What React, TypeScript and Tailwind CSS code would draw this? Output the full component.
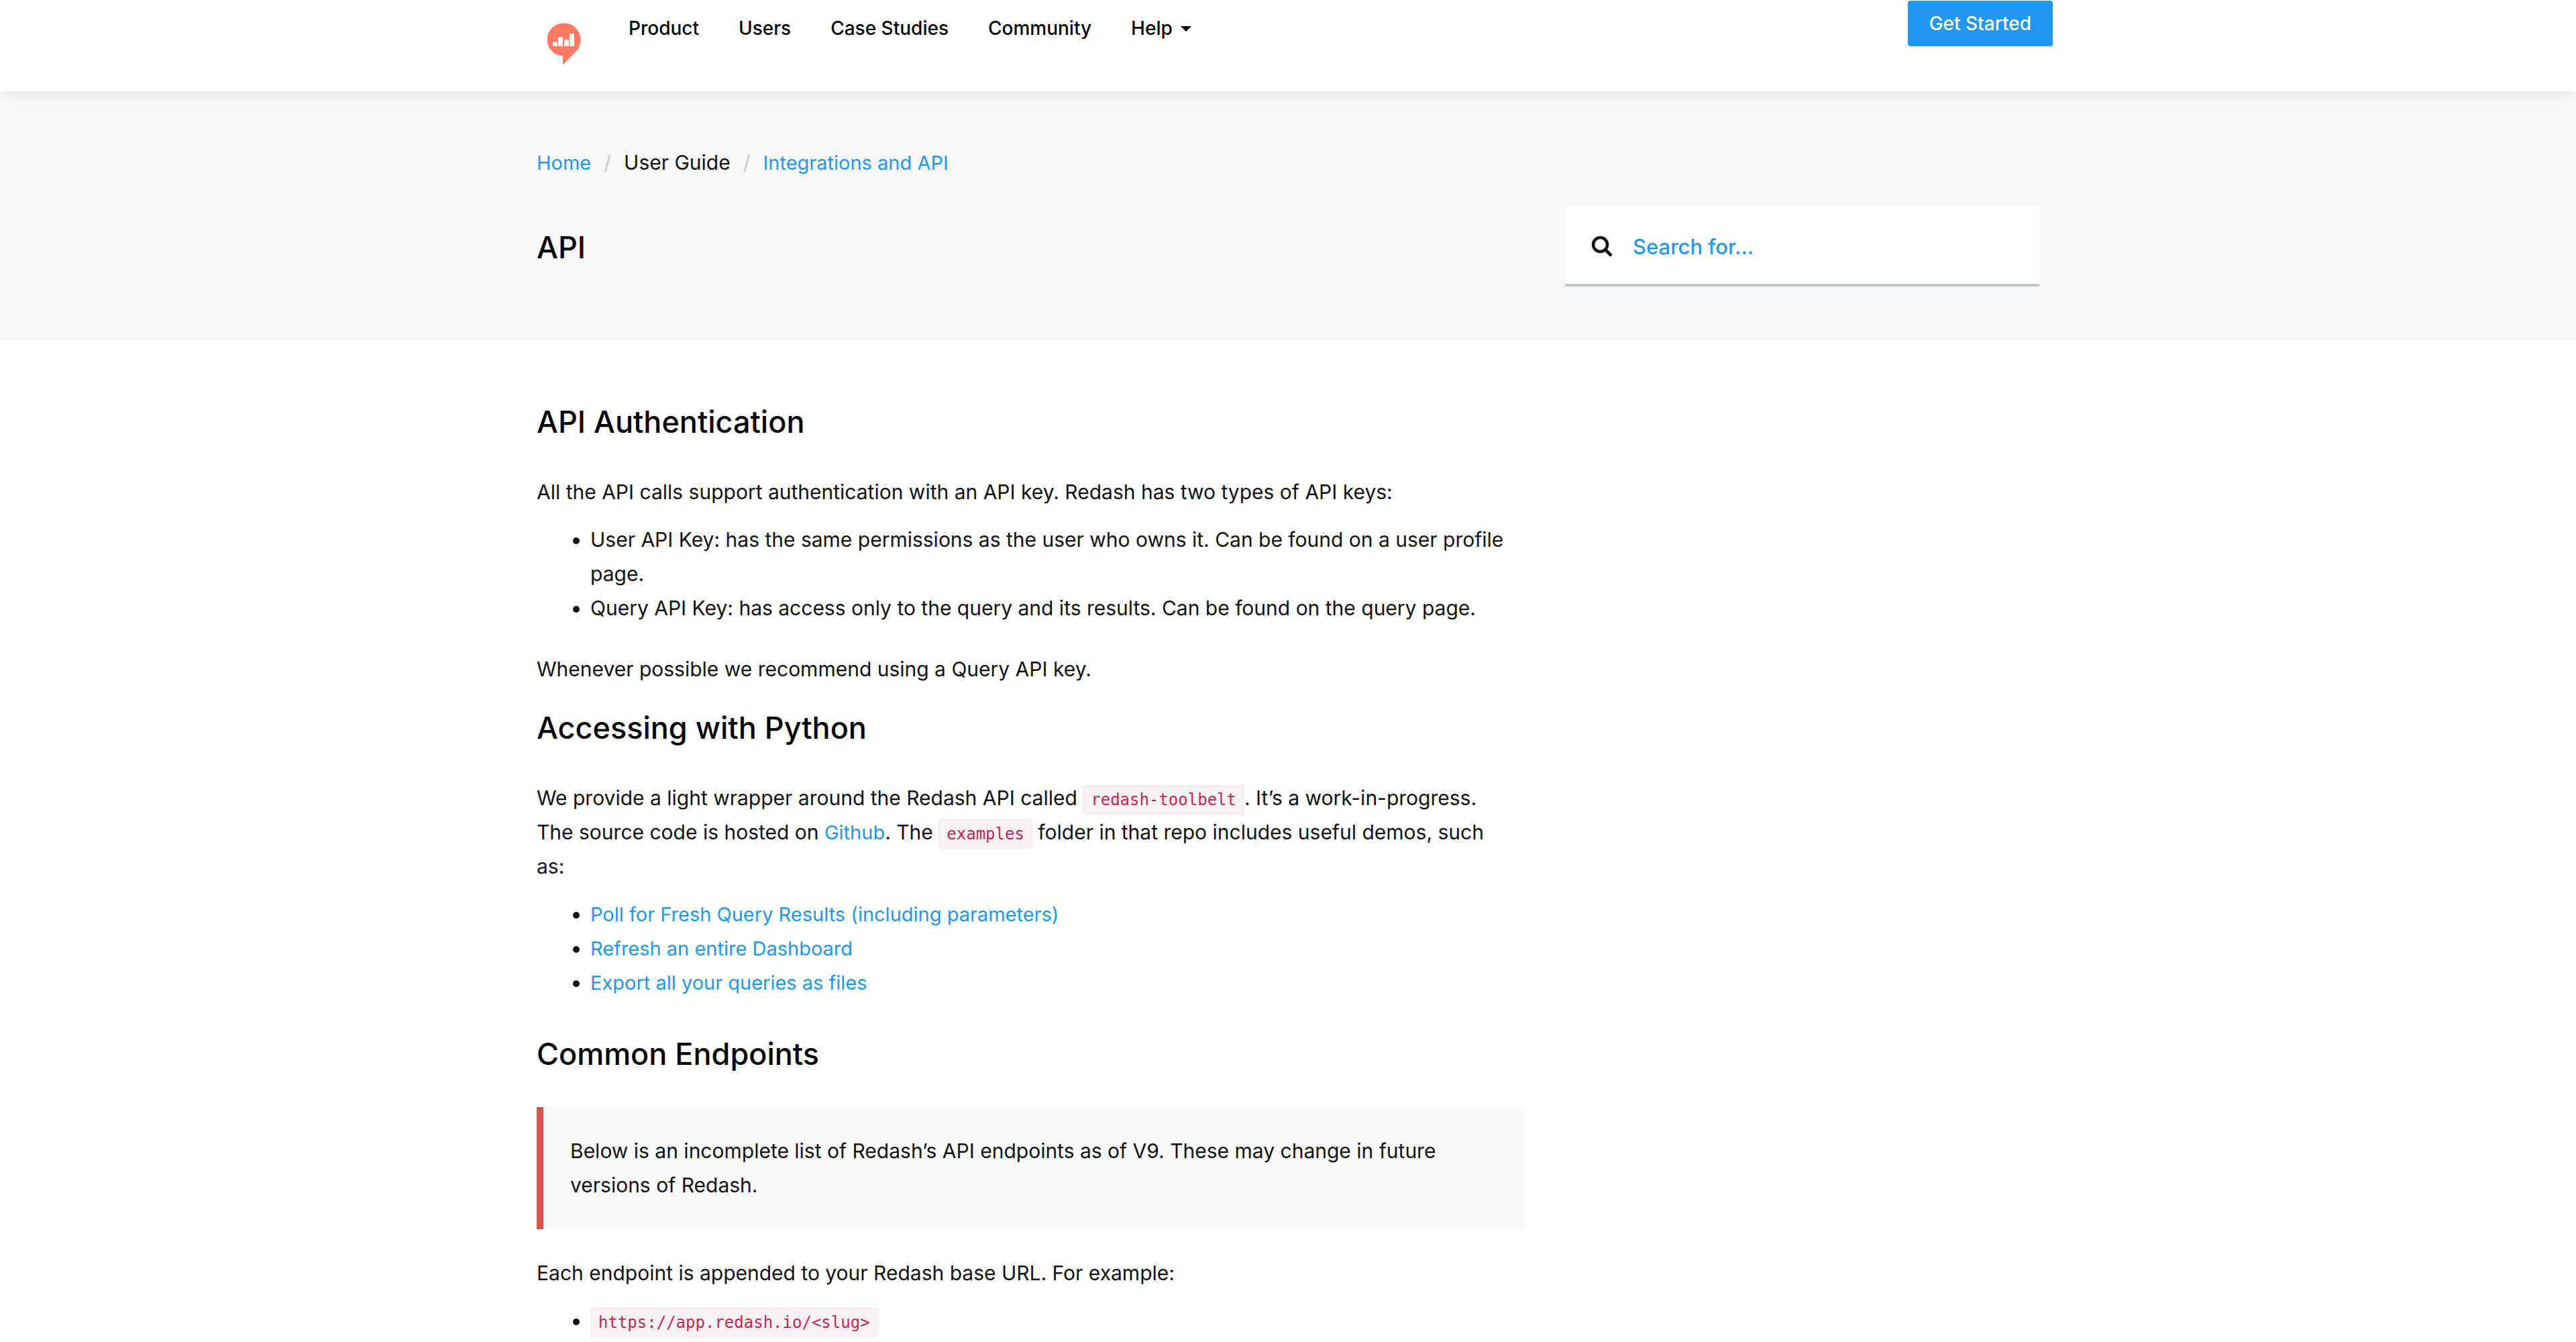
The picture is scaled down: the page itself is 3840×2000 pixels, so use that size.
import type { ReactNode } from "react";

const navItems = ["Product", "Users", "Case Studies", "Community"];

const demos = [
  "Poll for Fresh Query Results (including parameters)",
  "Refresh an entire Dashboard",
  "Export all your queries as files",
];

function Logo() {
  return (
    <svg viewBox="0 0 50 64" className="h-16 w-[50px]" aria-hidden="true">
      <path
        d="M25 0.5A24.5 24.5 0 0 1 49.5 25C49.5 31 48 35.500 45 40L23 63V49.500A24.5 24.5 0 0 1 25 0.500Z"
        fill="#ff7964"
      />
      <g fill="#fff">
        <rect x="8" y="28.500" width="7" height="6.500" rx="1.5" />
        <rect x="16" y="21" width="7" height="14" rx="1.5" />
        <rect x="25" y="25" width="7" height="10" rx="1.5" />
        <rect x="33" y="16" width="7" height="19" rx="1.5" />
      </g>
    </svg>
  );
}

function SearchIcon() {
  return (
    <svg viewBox="0 0 32 32" className="size-8 shrink-0" fill="none" stroke="#111" strokeLinecap="round" aria-hidden="true">
      <circle cx="13.500" cy="13.500" r="10.500" strokeWidth="4.500" />
      <path d="M22 22L28.500 28.500" strokeWidth="5" />
    </svg>
  );
}

function TextLink({ children }: { children: ReactNode }) {
  return (
    <a href="#" className="text-[29px] leading-none text-[#2196f3]">
      {children}
    </a>
  );
}

function Code({ children }: { children: ReactNode }) {
  return (
    <code className="rounded border-2 border-[#f5ecef] bg-[#f9f2f4] px-2.5 py-1.5 font-['DejaVu_Sans_Mono',monospace] text-[24px] leading-none text-[#c7254e]">
      {children}
    </code>
  );
}

function Heading({ children }: { children: ReactNode }) {
  return <h2 className="text-[45px] leading-[60px] font-medium text-black">{children}</h2>;
}

export default function App() {
  return (
    <div className="min-h-screen bg-white font-['Inter',sans-serif] text-[30px] leading-[51px] text-[#111]">
      <header className="relative z-10 h-[136px] bg-white shadow-[0_2px_20px_rgba(0,0,0,0.08)]">
        <div className="mx-auto flex max-w-[2280px] items-start">
          <a href="#" aria-label="Redash" className="ml-9 mt-[34px] block">
            <Logo />
          </a>
          <nav className="ml-[71px] mt-[17px] flex gap-[59px] text-[28px] font-medium text-black">
            {navItems.map((item) => (
              <a key={item} href="#">
                {item}
              </a>
            ))}
            <button type="button" className="flex items-center gap-3">
              Help
              <svg viewBox="0 0 16 8" className="h-2 w-4" aria-hidden="true">
                <path d="M0 0H16L8 8Z" />
              </svg>
            </button>
          </nav>
          <a
            href="#"
            className="mt-px ml-auto rounded bg-[#2196f3] px-8 pt-[9px] pb-2 text-[28px] font-medium text-white"
          >
            Get Started
          </a>
        </div>
      </header>

      <section className="bg-[#f7f7f7] pt-[81px] pb-20">
        <div className="mx-auto max-w-[2240px]">
          <nav aria-label="Breadcrumb" className="flex gap-[19px]">
            <a href="#" className="text-[29px] text-[#2196f3]">
              Home
            </a>
            <span className="text-[#ccc]">/</span>
            <span>User Guide</span>
            <span className="text-[#ccc]">/</span>
            <a href="#" className="text-[29px] text-[#2196f3]">
              Integrations and API
            </a>
          </nav>
          <div className="mt-[39px] flex items-center justify-between">
            <h1 className="pt-1 text-[45px] leading-[60px] font-medium text-black">API</h1>
            <label className="flex h-[120px] w-[707px] items-center gap-[30px] border-b-4 border-[#bcc8ce] bg-white px-[39px] pt-1">
              <SearchIcon />
              <input
                type="text"
                aria-label="Search"
                placeholder="Search for..."
                className="min-w-0 flex-1 text-[31px] font-medium outline-none placeholder:text-[#2196f3]"
              />
            </label>
          </div>
        </div>
      </section>

      <div className="mx-auto max-w-[2240px] pt-[92px]">
        <main className="max-w-[1473px]">
          <Heading>API Authentication</Heading>
          <p className="mt-[49px]">
            All the API calls support authentication with an API key. Redash has two types of API keys:
          </p>
          <ul className="mt-5 list-disc pl-20">
            <li>
              User API Key: has the same permissions as the user who owns it. Can be found on a user profile
              <br />
              page.
            </li>
            <li>Query API Key: has access only to the query and its results. Can be found on the query page.</li>
          </ul>
          <p className="mt-10 mb-8">Whenever possible we recommend using a Query API key.</p>

          <Heading>Accessing with Python</Heading>
          <p className="mt-[49px]">
            We provide a light wrapper around the Redash API called <Code>redash-toolbelt</Code>. It’s a
            work-in-progress.
            <br />
            The source code is hosted on <TextLink>Github</TextLink>. The <Code>examples</Code> folder in that repo
            includes useful demos, such
            <br />
            as:
          </p>
          <ul className="mt-5 mb-[51px] list-disc pl-20">
            {demos.map((demo) => (
              <li key={demo}>
                <TextLink>{demo}</TextLink>
              </li>
            ))}
          </ul>

          <Heading>Common Endpoints</Heading>
          <blockquote className="mt-[49px] border-l-10 border-[#d9534f] bg-[#f8faf9] px-10 py-10">
            Below is an incomplete list of Redash’s API endpoints as of V9. These may change in future
            <br />
            versions of Redash.
          </blockquote>
          <p className="mt-10">Each endpoint is appended to your Redash base URL. For example:</p>
          <ul className="mt-5 list-disc pl-20">
            <li>
              <Code>https://app.redash.io/&lt;slug&gt;</Code>
            </li>
          </ul>
        </main>
      </div>
    </div>
  );
}
